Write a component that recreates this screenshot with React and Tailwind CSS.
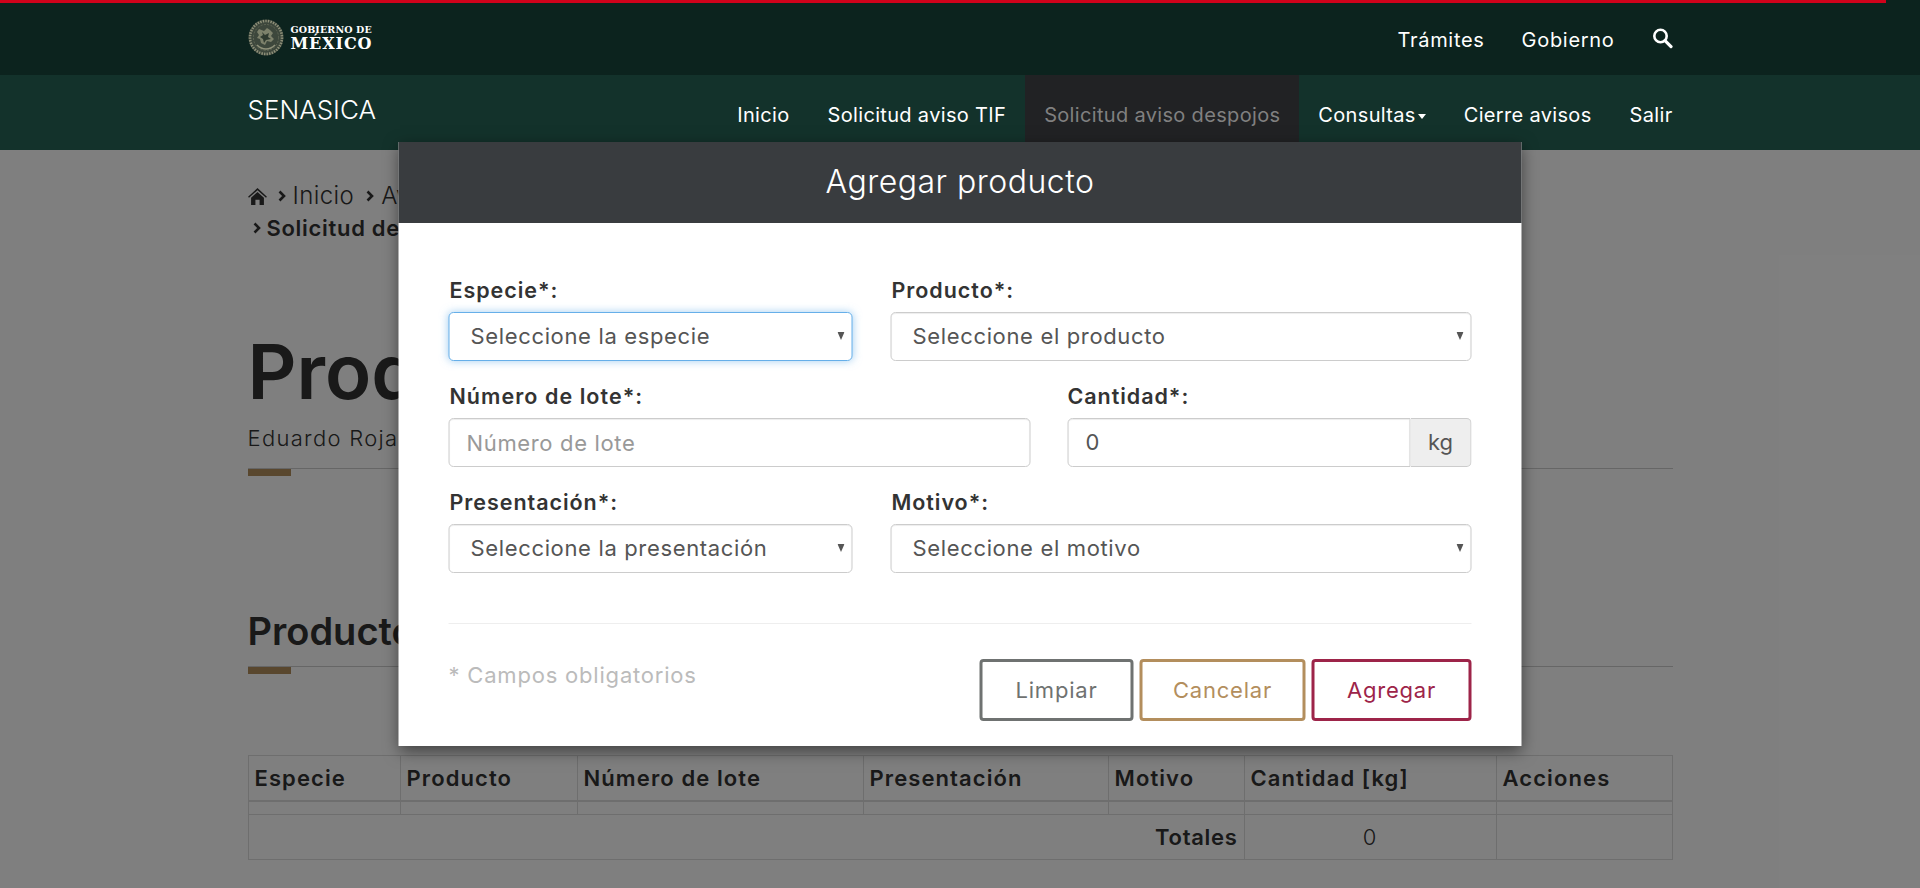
import { useState } from 'react';

const topLinks = ['Trámites', 'Gobierno'];
const navItems = [
  { label: 'Inicio' },
  { label: 'Solicitud aviso TIF' },
  { label: 'Solicitud aviso despojos', active: true },
  { label: 'Consultas', caret: true },
  { label: 'Cierre avisos' },
  { label: 'Salir' },
];

function Emblem() {
  return (
    <svg viewBox="0 0 36 37" className="w-[36px] h-[37px] shrink-0">
      <ellipse cx="18" cy="18.5" rx="17.5" ry="18" fill="#3d473c" />
      <ellipse cx="18" cy="18.5" rx="16" ry="16.5" fill="none" stroke="#8f917a" strokeWidth="2.6" strokeDasharray="1.4 1.2" />
      <ellipse cx="18" cy="18.5" rx="12.6" ry="13" fill="none" stroke="#5f6655" strokeWidth="1" strokeDasharray="2 1.4" />
      <path d="M11 10l5 2 3-3 3 2 3 3-2 3 3 3-3 3-4-1-2 4-4-2-1-4-3-1 2-3-2-3z" fill="#7d816b" />
      <path d="M14 13l3 3 4-2-1 4 3 2-5 1-2 3-1-4-3-2 3-2z" fill="#2f3a30" />
      <path d="M9 26c3 3 6 4 9 4s6-1 9-4" fill="none" stroke="#8f917a" strokeWidth="1.6" />
    </svg>
  );
}

function SearchIcon() {
  return (
    <svg viewBox="0 0 21 21" className="w-[21px] h-[21px] -mt-[4px]">
      <circle cx="8.5" cy="8" r="6.2" fill="none" stroke="#fff" strokeWidth="2.6" />
      <path d="M13 12.6l6 6" stroke="#fff" strokeWidth="3.2" strokeLinecap="round" />
    </svg>
  );
}

function HomeIcon() {
  return (
    <svg viewBox="0 0 20 18" className="w-[19px] h-[17px] shrink-0">
      <path d="M10 0L0 9.2l1 1.2L10 2.4l9 8 1-1.2z" fill="#333" />
      <path d="M3.2 10.2L10 4.2l6.8 6V18h-4.6v-5.6H7.8V18H3.2z" fill="#333" />
    </svg>
  );
}

function Chevron({ className = '' }) {
  return (
    <svg viewBox="0 0 8 12" className={`w-[8px] h-[12px] shrink-0 ${className}`}>
      <path d="M1.5 1.5L6 6l-4.5 4.5" fill="none" stroke="#333" strokeWidth="2.6" />
    </svg>
  );
}

function SelectField({ label, placeholder, focused, className }) {
  return (
    <div className={className}>
      <label className="block h-[34px] leading-[24px] pl-[1px] text-[21.5px] font-semibold text-[#333] tracking-[0.95px] whitespace-nowrap">{label}</label>
      <div className="relative">
        <select
          defaultValue=""
          className={`block w-full h-[49px] appearance-none bg-white rounded-[5px] pl-[21px] pr-8 text-[22px] text-[#555] tracking-[0.65px] border outline-none ${
            focused
              ? 'border-[#66afe9] shadow-[0_0_8px_rgba(102,175,233,0.6)]'
              : 'border-[#ccc] shadow-[inset_0_1px_1px_rgba(0,0,0,0.075)]'
          }`}
        >
          <option value="">{placeholder}</option>
        </select>
        <svg viewBox="0 0 8 9" className="absolute right-[8px] top-[20px] w-[7px] h-[8px]">
          <path d="M0 0h8L4 9z" fill="#555" />
        </svg>
      </div>
    </div>
  );
}

export default function App() {
  const [lote, setLote] = useState('');
  const [cantidad, setCantidad] = useState('0');

  return (
    <div className="relative w-[1920px] h-[888px] overflow-hidden bg-white [font-family:Inter,sans-serif] text-[#333]">
      {/* Header */}
      <header className="relative z-20">
        <div className="h-[75px] bg-[#0c231e]">
          <div className="h-[3px] w-[1886px] bg-[#d0021b]" />
          <div className="w-[1425px] mx-auto h-[72px] flex items-center justify-between">
            <div className="flex items-center gap-[7px] -mt-[3px]">
              <Emblem />
              <div className="[font-family:'DejaVu_Serif',serif] font-bold text-white">
                <div className="text-[9.5px] leading-[11px] tracking-[0.15px]">GOBIERNO DE</div>
                <div className="text-[16px] leading-[17px] tracking-[0.9px]">MÉXICO</div>
              </div>
            </div>
            <nav className="flex items-center gap-[37px] text-[20px] tracking-[0.7px] text-white pt-[2px]">
              {topLinks.map((l) => (
                <a key={l}>{l}</a>
              ))}
              <SearchIcon />
            </nav>
          </div>
        </div>
        <div className="h-[75px] bg-[#13322b]">
          <div className="w-[1425px] mx-auto h-full flex justify-between text-white">
            <div className="text-[26px] font-light leading-[70px]">SENASICA</div>
            <nav className="flex -mr-[19px]">
              {navItems.map((item) => (
                <a
                  key={item.label}
                  className={`flex items-center px-[19px] pt-[5px] text-[20px] tracking-[0.33px] ${item.active ? 'bg-[#212224] text-[#808080]' : ''}`}
                >
                  {item.label}
                  {item.caret && (
                    <svg viewBox="0 0 8 5" className="w-[8px] h-[5px] ml-[2px] mt-[2px]">
                      <path d="M0 0h8L4 5z" fill="#fff" />
                    </svg>
                  )}
                </a>
              ))}
            </nav>
          </div>
        </div>
      </header>

      {/* Page behind the dialog */}
      <main className="w-[1425px] mx-auto pt-[30px]">
        <div className="font-light leading-[32px]">
          <div className="flex items-center gap-[7px] text-[24px] tracking-[0.4px]">
            <HomeIcon />
            <Chevron className="ml-[4px]" />
            <span className="whitespace-nowrap">Inicio</span>
            <Chevron className="ml-[5px]" />
            <span className="whitespace-nowrap">Avisos</span>
          </div>
          <div className="flex items-center gap-[6px] pl-[5px] font-semibold text-[22px] tracking-[0.7px]">
            <Chevron />
            <span className="whitespace-nowrap">Solicitud de aviso</span>
          </div>
        </div>
        <h1 className="mt-[87px] text-[76px] leading-[80px] font-semibold">Productos</h1>
        <p className="mt-[13px] h-[28px] text-[22px] leading-[28px] font-light tracking-[1.3px] whitespace-nowrap">Eduardo Rojas</p>
        <div className="mt-[16px] h-px bg-[#ccc]" />
        <div className="w-[43px] h-[7px] bg-[#b38e5d]" />
        <h2 className="mt-[131px] text-[38px] leading-[48px] font-semibold">Productos</h2>
        <div className="mt-[11px] h-px bg-[#ccc]" />
        <div className="w-[43px] h-[7px] bg-[#b38e5d]" />
        <table className="mt-[81px] w-full table-fixed border-collapse text-[22px] tracking-[1.1px]">
          <colgroup>
            <col className="w-[152px]" />
            <col className="w-[177px]" />
            <col className="w-[286px]" />
            <col className="w-[245px]" />
            <col className="w-[136px]" />
            <col className="w-[252px]" />
            <col />
          </colgroup>
          <thead>
            <tr className="h-[45px] border-b-2 border-[#ddd]">
              {['Especie', 'Producto', 'Número de lote', 'Presentación', 'Motivo', 'Cantidad [kg]', 'Acciones'].map((h) => (
                <th key={h} className="border border-[#ddd] px-[6px] pt-[2px] text-left font-semibold whitespace-nowrap">{h}</th>
              ))}
            </tr>
          </thead>
          <tbody>
            <tr className="h-[14px]">
              {[0, 1, 2, 3, 4, 5, 6].map((i) => (
                <td key={i} className="border border-[#ddd]" />
              ))}
            </tr>
            <tr className="h-[45px]">
              <td colSpan={5} className="border border-[#ddd] px-[6px] text-right font-semibold tracking-[0.7px]">Totales</td>
              <td className="border border-[#ddd] text-center font-light">0</td>
              <td className="border border-[#ddd]" />
            </tr>
          </tbody>
        </table>
      </main>

      {/* Backdrop */}
      <div className="absolute inset-0 z-10 bg-black/50" />

      {/* Dialog */}
      <div className="absolute z-30 top-[142px] left-1/2 -translate-x-1/2 w-[1123px] h-[604px] bg-white shadow-[0_5px_15px_rgba(0,0,0,0.5)]">
        <div className="h-[81px] pb-[2px] bg-[#393c3f] flex items-center justify-center text-white text-[32px] tracking-[0.5px] font-light">
          Agregar producto
        </div>
        <div className="px-[50px] pt-[55px]">
          <div className="flex gap-[38px]">
            <SelectField className="w-[404px] shrink-0" label="Especie*:" placeholder="Seleccione la especie" focused />
            <SelectField className="flex-1 min-w-0" label="Producto*:" placeholder="Seleccione el producto" />
          </div>
          <div className="flex gap-[37px] mt-[23px]">
            <div className="w-[582px] shrink-0">
              <label className="block h-[34px] leading-[24px] pl-[1px] text-[21.5px] font-semibold tracking-[1.05px]">Número de lote*:</label>
              <input
                value={lote}
                onChange={(e) => setLote(e.target.value)}
                placeholder="Número de lote"
                className="block w-full h-[49px] rounded-[5px] border border-[#ccc] px-[17px] text-[22px] tracking-[0.65px] text-[#555] placeholder:text-[#999] shadow-[inset_0_1px_1px_rgba(0,0,0,0.075)] outline-none"
              />
            </div>
            <div className="flex-1 min-w-0">
              <label className="block h-[34px] leading-[24px] text-[21.5px] font-semibold tracking-[0.95px]">Cantidad*:</label>
              <div className="flex h-[49px]">
                <input
                  value={cantidad}
                  onChange={(e) => setCantidad(e.target.value)}
                  className="min-w-0 flex-1 rounded-l-[5px] border border-[#ccc] px-[17px] text-[22px] text-[#555] shadow-[inset_0_1px_1px_rgba(0,0,0,0.075)] outline-none"
                />
                <span className="w-[61px] shrink-0 flex items-center justify-center rounded-r-[5px] border border-l-0 border-[#ccc] bg-[#eee] text-[22px] text-[#555]">kg</span>
              </div>
            </div>
          </div>
          <div className="flex gap-[38px] mt-[23px]">
            <SelectField className="w-[404px] shrink-0" label="Presentación*:" placeholder="Seleccione la presentación" />
            <SelectField className="flex-1 min-w-0" label="Motivo*:" placeholder="Seleccione el motivo" />
          </div>
          <div className="mt-[50px] h-px bg-[#eee]" />
          <div className="mt-[34px] flex justify-between items-start">
            <span className="text-[22px] tracking-[0.8px] text-[#bbb] leading-[34px]">* Campos obligatorios</span>
            <div className="flex gap-[6px] text-[22px] tracking-[0.8px] mt-px">
              <button className="w-[154px] h-[62px] rounded-[4px] border-[3px] border-[#6f7271] text-[#6f7271]">Limpiar</button>
              <button className="w-[166px] h-[62px] rounded-[4px] border-[3px] border-[#b38e5d] text-[#b38e5d]">Cancelar</button>
              <button className="w-[160px] h-[62px] rounded-[4px] border-[3px] border-[#9d2449] text-[#9d2449]">Agregar</button>
            </div>
          </div>
        </div>
      </div>
    </div>
  );
}
